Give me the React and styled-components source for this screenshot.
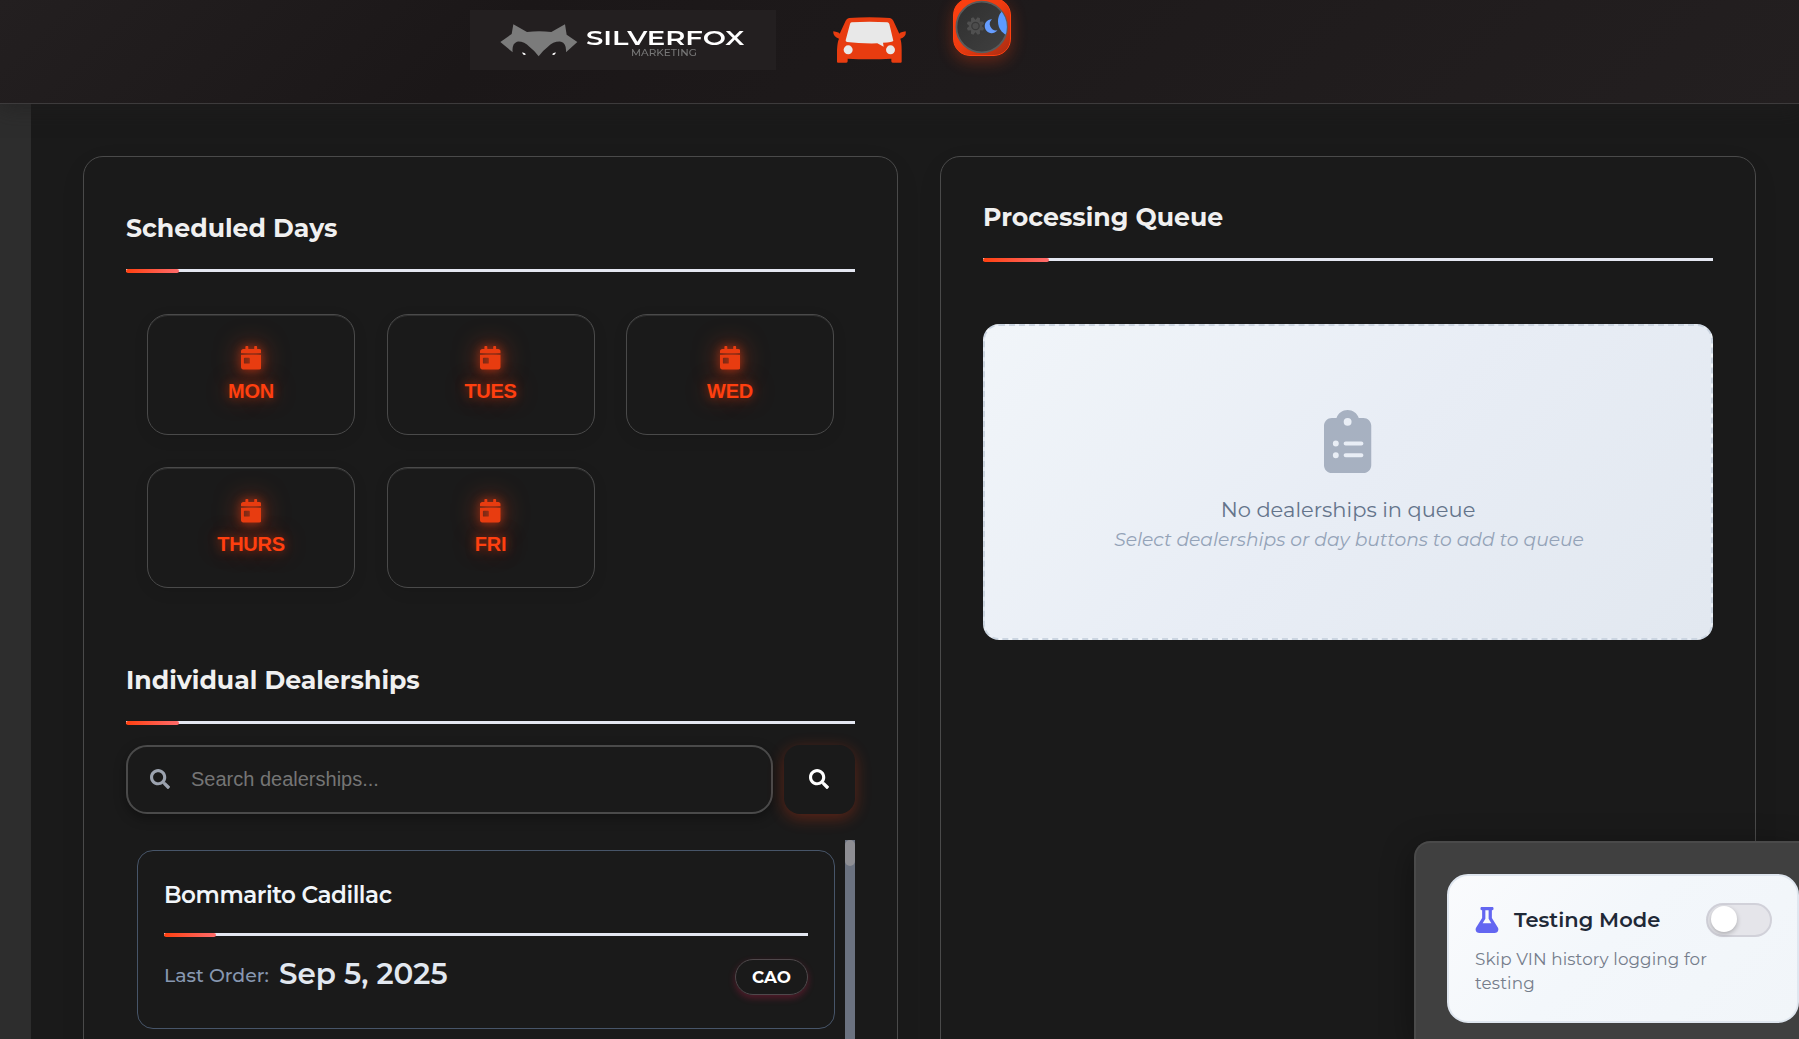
import React from "react";
import styled, { createGlobalStyle, css } from "styled-components";
import { FaCalendarDay, FaSearch, FaFlask } from "react-icons/fa";
import { FaClipboardList } from "react-icons/fa6";

const sans = `Montserrat, Inter, "Open Sans", sans-serif`;
const arial = `"Liberation Sans", Arial, sans-serif`;

const Global = createGlobalStyle`
  * { box-sizing: border-box; }
  body { margin: 0; background: #1a1a1a; overflow: hidden; }
`;

const Page = styled.div`
  display: flex;
  flex-direction: column;
  width: 100%;
  height: 1039px;
  overflow: hidden;
  background: #1a1a1a;
  color: #f0f0f0;
  font-family: ${sans};
`;

/* Extended lettering for the logo. */
const Wide = styled.span`
  display: inline-block;
  white-space: nowrap;
  transform: scaleX(${(p) => p.$x});
  transform-origin: left center;
`;

const Header = styled.header`
  display: flex;
  align-items: flex-start;
  flex: 0 0 104px;
  padding-left: 470px;
  background: linear-gradient(135deg, #231f20 0%, #1b1718 28%, #1e1a1b 55%, #231f20 100%);
  border-bottom: 1px solid #3d3b3c;
  box-shadow: 0 4px 20px rgba(32, 30, 30, 0.6);
  z-index: 1;
`;

const Brand = styled.div`
  display: flex;
  width: 306px;
  height: 60px;
  margin-top: 10px;
  padding: 14px 0 0 30px;
  background: #231f20;
`;

const BrandWords = styled.div`
  display: flex;
  flex-direction: column;
  margin-left: 8px;
`;

const BrandName = styled.div`
  height: 25px;
  font: 600 21px/27px ${sans};
  color: #fff;
`;

const BrandSub = styled.div`
  padding-left: 45px;
  font: 500 8.4px/8px ${sans};
  color: #777;
`;

const CarMark = styled.div`
  margin: 17px 0 0 57px;
  line-height: 0;
`;

const ThemeButton = styled.div`
  width: 58px;
  height: 58px;
  margin: -2px 0 0 47px;
  padding: 1px 0 0 1px;
  border: 1px solid #ff4010;
  border-radius: 17px;
  background: linear-gradient(135deg, #ff4010 0%, #f03c10 45%, #a82c12 100%);
  box-shadow: 0 5px 16px rgba(255, 64, 16, 0.32);
  line-height: 0;
`;

const Body = styled.div`
  display: flex;
  flex: 1;
  min-height: 0;
`;

const Rail = styled.aside`
  flex: 0 0 31px;
  background: #2d2d2d;
`;

const Main = styled.main`
  display: grid;
  grid-template-columns: 815px 816px;
  gap: 42px;
  flex: 1;
  height: 1000px;
  padding: 52px 43px 0 52px;
`;

const Panel = styled.section`
  padding: ${(p) => (p.$low ? 53 : 42)}px 42px 0;
  border: 1px solid #4a4a4a;
  border-radius: 20px;
  box-shadow: 0 8px 32px rgba(0, 0, 0, 0.04);
  min-width: 0;
`;

const rule = css`
  border-bottom: 3px solid #e4e7f1;
  position: relative;
  &::after {
    content: "";
    position: absolute;
    left: 0;
    bottom: -4px;
    width: ${(p) => p.$accent || 53}px;
    height: 4px;
    border-radius: 2px;
    background: linear-gradient(90deg, #ff4010, #ff6b6b);
  }
`;

const Heading = styled.h2`
  margin: ${(p) => p.$top || 0}px 0 0;
  padding-bottom: 22px;
  font: 700 25.2px/37px ${sans};
  color: #f0f0f0;
  ${rule}
`;

const Days = styled.div`
  display: grid;
  grid-template-columns: repeat(3, 208px);
  grid-auto-rows: 121px;
  gap: 32px 31.5px;
  padding: 42px 21px 0;
`;

const Day = styled.button`
  display: flex;
  flex-direction: column;
  align-items: center;
  padding: 31px 0 0;
  border: 1px solid #4a4a4a;
  border-radius: 21px;
  background: #1a1a1a;
  box-shadow: 0 4px 15px rgba(0, 0, 0, 0.08), inset 0 1px 0 rgba(255, 255, 255, 0.1);
  font: 700 20px/24px ${arial};
  letter-spacing: -0.3px;
  color: #ff4010;
  text-shadow: 0 0 10px rgba(255, 64, 16, 0.5), 0 0 24px rgba(255, 64, 16, 0.4);
  svg {
    width: 20.5px;
    height: 23.5px;
    margin-bottom: 9px;
    color: #e83c10;
    filter: drop-shadow(0 0 5px rgba(255, 64, 16, 0.6)) drop-shadow(0 0 12px rgba(255, 64, 16, 0.5));
  }
`;

const SearchRow = styled.div`
  display: flex;
  gap: 11px;
  margin-top: 21px;
`;

const Field = styled.label`
  display: flex;
  align-items: center;
  flex: 1;
  height: 69px;
  padding: 0 21px 2px;
  gap: 21px;
  border: 2px solid #4a4a4a;
  border-radius: 21px;
  box-shadow: 0 4px 12px rgba(0, 0, 0, 0.35);
  color: #9ca3af;
  svg { margin-left: 0.5px; margin-right: 0.5px; }
  input {
    flex: 1;
    padding: 0;
    border: 0;
    background: none;
    outline: none;
    font: 20px/24px ${arial};
  }
  input::placeholder { color: #757575; }
`;

const SearchButton = styled.button`
  display: flex;
  align-items: center;
  justify-content: center;
  width: 71px;
  height: 69px;
  padding: 0 1px 2px 0;
  border: 0;
  border-radius: 16px;
  background: #1a1a1a;
  box-shadow: 0 4px 16px rgba(255, 64, 16, 0.3);
  color: #fff;
`;

const List = styled.div`
  display: flex;
  gap: 10px;
  margin-top: 26px;
  padding-left: 11px;
`;

const Track = styled.div`
  flex: 0 0 10px;
  height: 260px;
  background: #6b7280;
`;

const Thumb = styled.div`
  height: 26px;
  border-radius: 5px;
  background: #8e8e93;
`;

const Dealer = styled.article`
  flex: 1;
  height: 179px;
  margin-top: 10px;
  padding: 26px 26px 0;
  border: 1px solid #475569;
  border-radius: 16px;
`;

const DealerName = styled.h4`
  margin: 0;
  padding-bottom: 20px;
  font: 600 23.1px/36px ${sans};
  letter-spacing: -0.46px;
  color: #f1f5f9;
  ${rule}
`;

const DealerMeta = styled.div`
  display: flex;
  align-items: flex-start;
  padding-top: 21px;
`;

const MetaLabel = styled.span`
  width: 115px;
  margin-top: 2px;
  font: 500 18.9px/34px ${sans};
  color: #8797b0;
`;

const MetaDate = styled.span`
  flex: 1;
  font: 600 29.4px/34px ${sans};
  color: #e2e8f0;
`;

const Badge = styled.span`
  width: 73px;
  height: 36px;
  margin-top: 2px;
  border: 1px solid #4f484b;
  border-radius: 18px;
  box-shadow: 0 3px 7px rgba(220, 30, 80, 0.3);
  font: 700 16.8px/34px ${sans};
  text-align: center;
  color: #fff;
`;

const Empty = styled.div`
  display: flex;
  flex-direction: column;
  align-items: center;
  height: 316px;
  margin-top: 63px;
  padding-top: 84px;
  border: 2px dashed #cbd5e1;
  border-radius: 16px;
  background: linear-gradient(135deg, #f1f5f9 0%, #e8edf5 50%, #e2e8f0 100%);
  svg { width: 47.25px; height: 63px; color: #a7b1c1; }
`;

const EmptyTitle = styled.p`
  margin: 21px 0 0;
  font: 400 21px/32px ${sans};
  color: #64748b;
`;

const EmptyHint = styled.p`
  margin: 0 0 0 2px;
  font: italic 400 18.7px/28px ${sans};
  color: #94a3b8;
`;

const Drawer = styled.aside`
  position: absolute;
  z-index: 2;
  left: 1414px;
  top: 841px;
  width: 385px;
  height: 198px;
  padding: 31px 0 0 31px;
  border: 2px solid #4a4a4a;
  border-right: 0;
  border-bottom: 0;
  border-radius: 16px 0 0 0;
  background: #404040;
  box-shadow: 0 8px 32px rgba(0, 0, 0, 0.4);
`;

const TestCard = styled.div`
  height: 149px;
  padding: 25px 25px 0 26px;
  border: 2px solid #dfe6ef;
  border-radius: 21px;
  background: linear-gradient(135deg, #fafbfd 0%, #f3f7fb 45%, #f1f5f9 100%);
`;

const TestTop = styled.div`
  display: flex;
  align-items: center;
  height: 38px;
  color: #6366f1;
  > svg { margin-left: -1px; }
`;

const TestTitle = styled.span`
  flex: 1;
  padding-left: 14px;
  font: 600 21px/38px ${sans};
  color: #1f2937;
`;

const Switch = styled.span`
  width: 66px;
  height: 34px;
  padding: 1px 3px;
  border: 2px solid #d1d1d9;
  border-radius: 17px;
  background: #e5e5ea;
`;

const Knob = styled.span`
  display: block;
  width: 26px;
  height: 26px;
  border-radius: 50%;
  background: #fff;
  box-shadow: 0 2px 5px rgba(0, 0, 0, 0.25);
`;

const TestNote = styled.div`
  margin-top: 8px;
  font: 400 16.8px/24px ${sans};
  letter-spacing: 0.11px;
  color: #757d8b;
`;

const Fox = () => (
  <svg width="78" height="33" viewBox="179 71 234 99">
    <path
      fill="#7b7b7b"
      d="M219 72 L260 95 Q296 91 333 95 L374 72 L379 103 L411 125 L377 156 Q379 129 362 124 Q340 122 322 140 Q306 152 295 168 Q284 152 268 140 Q250 122 230 124 Q214 130 217 156 L180 125 L214 101 Z"
    />
    <path fill="#fff" d="M245 157 q7 -1 12 5 q-7 4 -9 -1 z M347 157 q-7 -1 -12 5 q7 4 9 -1 z" />
  </svg>
);

const Car = () => (
  <svg width="73" height="46" viewBox="99 51 219 138">
    <path
      fill="#e83c10"
      d="M147 54 Q208 49 270 54 Q277 56 280 62 L298 101 Q301 96 317 94 Q320 110 301 116 Q305 126 305 150 L305 185 Q305 188 302 188 L278 188 Q274 188 274 184 L274 176 Q208 180 143 176 L143 184 Q143 188 139 188 L114 188 Q111 188 111 185 L111 150 Q112 126 117 116 Q98 110 100 94 Q116 96 119 101 L137 62 Q140 56 147 54 Z"
    />
    <path fill="#e8e8e8" d="M155 67 Q208 63 262 67 Q266 68 268 72 L280 122 Q278 126 249 128 L251 140 L232 130 Q180 131 141 126 Q136 125 137 121 L150 72 Q151 68 155 67 Z" />
    <circle cx="144.500" cy="149.500" r="13.500" fill="#e8e8e8" />
    <circle cx="271.500" cy="149.500" r="13.500" fill="#e8e8e8" />
  </svg>
);

const teeth = [22.5, 67.5, 112.5, 157.5, 202.5, 247.5, 292.5, 337.5];

const DayNight = () => (
  <svg width="54" height="54" viewBox="955 0 54 54">
    <defs>
      <linearGradient id="face" x1="0" y1="0" x2="1" y2="1">
        <stop offset="0" stopColor="#2f2f2f" />
        <stop offset="1" stopColor="#404040" />
      </linearGradient>
      <clipPath id="dial">
        <circle cx="981.700" cy="27" r="25.200" />
      </clipPath>
    </defs>
    <circle cx="981.700" cy="27" r="25.300" fill="url(#face)" stroke="#5b5b5b" strokeWidth="1.800" />
    <g fill="#505050">
      {teeth.map((a) => (
        <path key={a} d="M972.900 21 L974.200 17.200 L976.800 17.200 L978.100 21 Z" transform={`rotate(${a} 975.500 26)`} />
      ))}
      <circle cx="975.500" cy="26" r="6" />
    </g>
    <circle cx="975.500" cy="26" r="3.700" fill="#4c4c4c" stroke="#383838" strokeWidth="1.200" />
    <path fill="#669dff" d="M992 19.200 A7 7 0 1 0 997.400 30.300 A6.400 6.400 0 0 1 992 19.200 Z" />
    <ellipse cx="1010.500" cy="21.500" rx="12.500" ry="14" fill="#5c9bff" clipPath="url(#dial)" />
  </svg>
);

const days = ["MON", "TUES", "WED", "THURS", "FRI"];

export default function App() {
  return (
    <Page>
      <Global />
      <Header>
        <Brand>
          <Fox />
          <BrandWords>
            <BrandName><Wide $x={1.31}>SILVERFOX</Wide></BrandName>
            <BrandSub><Wide $x={1.25}>MARKETING</Wide></BrandSub>
          </BrandWords>
        </Brand>
        <CarMark><Car /></CarMark>
        <ThemeButton><DayNight /></ThemeButton>
      </Header>
      <Body>
        <Rail />
        <Main>
          <Panel $low>
            <Heading>Scheduled Days</Heading>
            <Days>
              {days.map((d) => (
                <Day key={d}><FaCalendarDay />{d}</Day>
              ))}
            </Days>
            <Heading $top={74}>Individual Dealerships</Heading>
            <SearchRow>
              <Field>
                <FaSearch size={20} />
                <input placeholder="Search dealerships..." />
              </Field>
              <SearchButton><FaSearch size={20} /></SearchButton>
            </SearchRow>
            <List>
              <Dealer>
                <DealerName $accent={52}>Bommarito Cadillac</DealerName>
                <DealerMeta>
                  <MetaLabel>Last Order:</MetaLabel>
                  <MetaDate>Sep 5, 2025</MetaDate>
                  <Badge>CAO</Badge>
                </DealerMeta>
              </Dealer>
              <Track><Thumb /></Track>
            </List>
          </Panel>
          <Panel>
            <Heading $accent={66}>Processing Queue</Heading>
            <Empty>
              <FaClipboardList />
              <EmptyTitle>No dealerships in queue</EmptyTitle>
              <EmptyHint>Select dealerships or day buttons to add to queue</EmptyHint>
            </Empty>
          </Panel>
        </Main>
      </Body>
      <Drawer>
        <TestCard>
          <TestTop>
            <FaFlask size={26} />
            <TestTitle>Testing Mode</TestTitle>
            <Switch><Knob /></Switch>
          </TestTop>
          <TestNote>Skip VIN history logging for<br />testing</TestNote>
        </TestCard>
      </Drawer>
    </Page>
  );
}
